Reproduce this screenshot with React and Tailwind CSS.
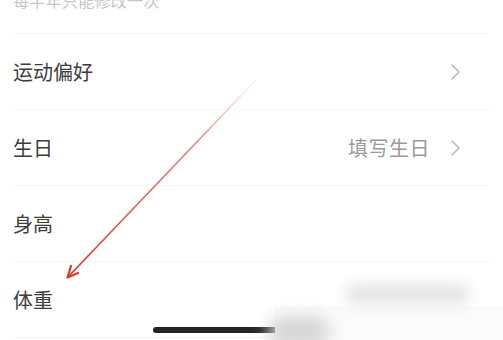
const rows = [
  { label: "运动偏好", value: null },
  { label: "生日", value: "填写生日" },
  { label: "身高", value: null, noArrow: true },
  { label: "体重", value: null, noArrow: true },
];

function Row({ label, value, noArrow }) {
  return (
    <div className="mx-[13px] flex h-[76px] items-center border-b border-[#f6f6f6] pr-[28px]">
      <span className="flex-1 text-[20px] leading-none text-[#3d3d3d]">{label}</span>
      {value ? <span className="mr-[20px] text-[20px] leading-none tracking-[0.5px] text-[#9a9a9a]">{value}</span> : null}
      {noArrow ? null : (
        <svg width="12" height="18" viewBox="0 0 12 18" className="mt-[1px]">
          <polyline points="2,2 9,9 2,16" fill="none" stroke="#b8b8b8" strokeWidth="1.6" strokeLinecap="round" strokeLinejoin="round" />
        </svg>
      )}
    </div>
  );
}

export default function App() {
  return (
    <div
      className="relative h-[340px] w-[503px] overflow-hidden bg-white"
      style={{ fontFamily: '"Noto Sans CJK SC", "Noto Sans", sans-serif' }}
    >
      <div className="mx-[13px] flex h-[34px] items-start border-b border-[#f6f6f6]">
        <p className="-mt-[9px] text-[16px] leading-[18px] tracking-[0.3px] text-[#c6c6c6]">每半年只能修改一次</p>
      </div>

      {rows.map((row) => (
        <Row key={row.label} {...row} />
      ))}

      {/* red annotation arrow */}
      <svg className="pointer-events-none absolute inset-0" width="503" height="340" viewBox="0 0 503 340">
        <defs>
          <linearGradient id="arrowFade" x1="256" y1="80" x2="68" y2="277" gradientUnits="userSpaceOnUse">
            <stop offset="0" stopColor="#f2c9c6" stopOpacity="0.2" />
            <stop offset="0.3" stopColor="#d9746d" stopOpacity="0.8" />
            <stop offset="1" stopColor="#d8392f" />
          </linearGradient>
        </defs>
        <line x1="68" y1="277" x2="256" y2="80" stroke="url(#arrowFade)" strokeWidth="1.8" strokeLinecap="round" />
        <polyline points="78,273 67.5,277.5 71,266" fill="none" stroke="#d8392f" strokeWidth="2.2" strokeLinecap="round" strokeLinejoin="round" />
      </svg>

      {/* home indicator */}
      <div className="absolute left-[153px] top-[327px] h-[6px] w-[130px] rounded-full bg-[#242424]" />

      {/* blurred corner */}
      <div className="pointer-events-none absolute left-[275px] top-[306px] h-[34px] w-[228px] bg-[#fbfbfb]" />
      <div className="pointer-events-none absolute left-[345px] top-[284px] h-[20px] w-[125px] rounded-full bg-[#e4e4e4] blur-[7px]" />
      <div className="pointer-events-none absolute left-[268px] top-[316px] h-[30px] w-[62px] rounded-full bg-[#d6d6d6] blur-[8px]" />
    </div>
  );
}
